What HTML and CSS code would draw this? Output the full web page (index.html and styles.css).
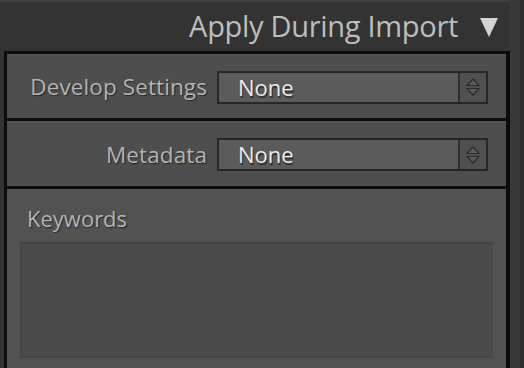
FILE: index.html
```html
<!DOCTYPE html>
<html lang="en">
<head>
  <meta charset="UTF-8" />
  <meta name="viewport" content="width=device-width, initial-scale=1" />
  <title>Apply During Import</title>
  <link rel="stylesheet" href="styles.css">
</head>
<body>
  <div class="main">
    <header class="panel-header">
      <span class="panel-title">Apply During Import</span>
      <svg class="toggle" width="18" height="19" viewBox="0 0 18 19">
        <polygon points="0,0 18,0 9,19" fill="#d4d4d4" />
      </svg>
    </header>
    <section class="panel">
      <div class="row">
        <label class="row-label">Develop Settings</label>
        <div class="select">
          <span class="select-value">None</span>
          <span class="select-arrows">
            <svg width="14" height="18" viewBox="0 0 14 18">
              <polygon points="1,7.5 7,1 13,7.5" fill="#5c5c5c" stroke="#2a2a2a" stroke-width="1.2" />
              <polygon points="1,10.5 7,17 13,10.5" fill="#5c5c5c" stroke="#2a2a2a" stroke-width="1.2" />
            </svg>
          </span>
        </div>
      </div>
      <div class="row">
        <label class="row-label">Metadata</label>
        <div class="select">
          <span class="select-value">None</span>
          <span class="select-arrows">
            <svg width="14" height="18" viewBox="0 0 14 18">
              <polygon points="1,7.5 7,1 13,7.5" fill="#5c5c5c" stroke="#2a2a2a" stroke-width="1.2" />
              <polygon points="1,10.5 7,17 13,10.5" fill="#5c5c5c" stroke="#2a2a2a" stroke-width="1.2" />
            </svg>
          </span>
        </div>
      </div>
      <div class="row keywords">
        <label class="keywords-label">Keywords</label>
        <div class="keywords-box"></div>
      </div>
    </section>
  </div>
  <div class="scroll-strip"></div>
</body>
</html>
```

FILE: styles.css
```css
body {
  margin: 0;
  width: 524px;
  height: 368px;
  overflow: hidden;
  display: flex;
  background-color: #333333;
  font-family: 'Open Sans', sans-serif;
}
.main {
  width: 510px;
  display: flex;
  flex-direction: column;
}
.panel-header {
  height: 49px;
  border-top: 2px solid #3e3e3e;
  display: flex;
  align-items: center;
  justify-content: flex-end;
  padding-right: 12px;
  gap: 22px;
}
.panel-title {
  font-size: 29px;
  color: #bdbdbd;
  letter-spacing: -0.3px;
  margin-top: -3px;
}
.toggle {
  margin-top: 2px;
}
.panel {
  flex-grow: 1;
  margin-left: 4px;
  border: 3px solid #0c0c0c;
  border-right-width: 4px;
  border-bottom: none;
  display: flex;
  flex-direction: column;
}
.row {
  height: 63px;
  display: flex;
  align-items: center;
  gap: 10px;
  background-color: #4e4e4e;
  border-top: 1px solid #585858;
  border-bottom: 3px solid #0c0c0c;
}
.row:nth-child(2) {
  height: 64px;
}
.row-label {
  width: 200px;
  text-align: right;
  font-size: 22.5px;
  color: #b4b4b4;
  text-shadow: 1px 1px 1px #262626;
  letter-spacing: 0.1px;
}
.select {
  width: 267px;
  height: 29px;
  border: 2px solid #262626;
  background-color: #5b5b5b;
  display: flex;
  margin-top: 1px;
}
.select-value {
  flex-grow: 1;
  padding-left: 19px;
  font-size: 22px;
  line-height: 29px;
  color: #ececec;
  text-shadow: 1px 2px 1px #2a2a2a;
}
.select-arrows {
  width: 26px;
  border-left: 2px solid #2e2e2e;
  background-color: #505050;
  display: flex;
  align-items: center;
  justify-content: center;
}
.keywords {
  flex-grow: 1;
  flex-direction: column;
  align-items: stretch;
  gap: 0;
  border-bottom: none;
  background-color: #525252;
}
.keywords-label {
  font-size: 22px;
  line-height: 26px;
  color: #b4b4b4;
  text-shadow: 1px 1px 1px #262626;
  padding: 15px 0 0 20px;
}
.keywords-box {
  margin: 11px 11px 0 13px;
  height: 112px;
  border: 2px solid #444444;
  border-right-color: #555555;
  border-bottom-color: #464646;
  background-color: #4a4a4a;
}
.scroll-strip {
  flex-grow: 1;
  background-color: #393939;
  border-right: 4px solid #2d2d2d;
}
```
